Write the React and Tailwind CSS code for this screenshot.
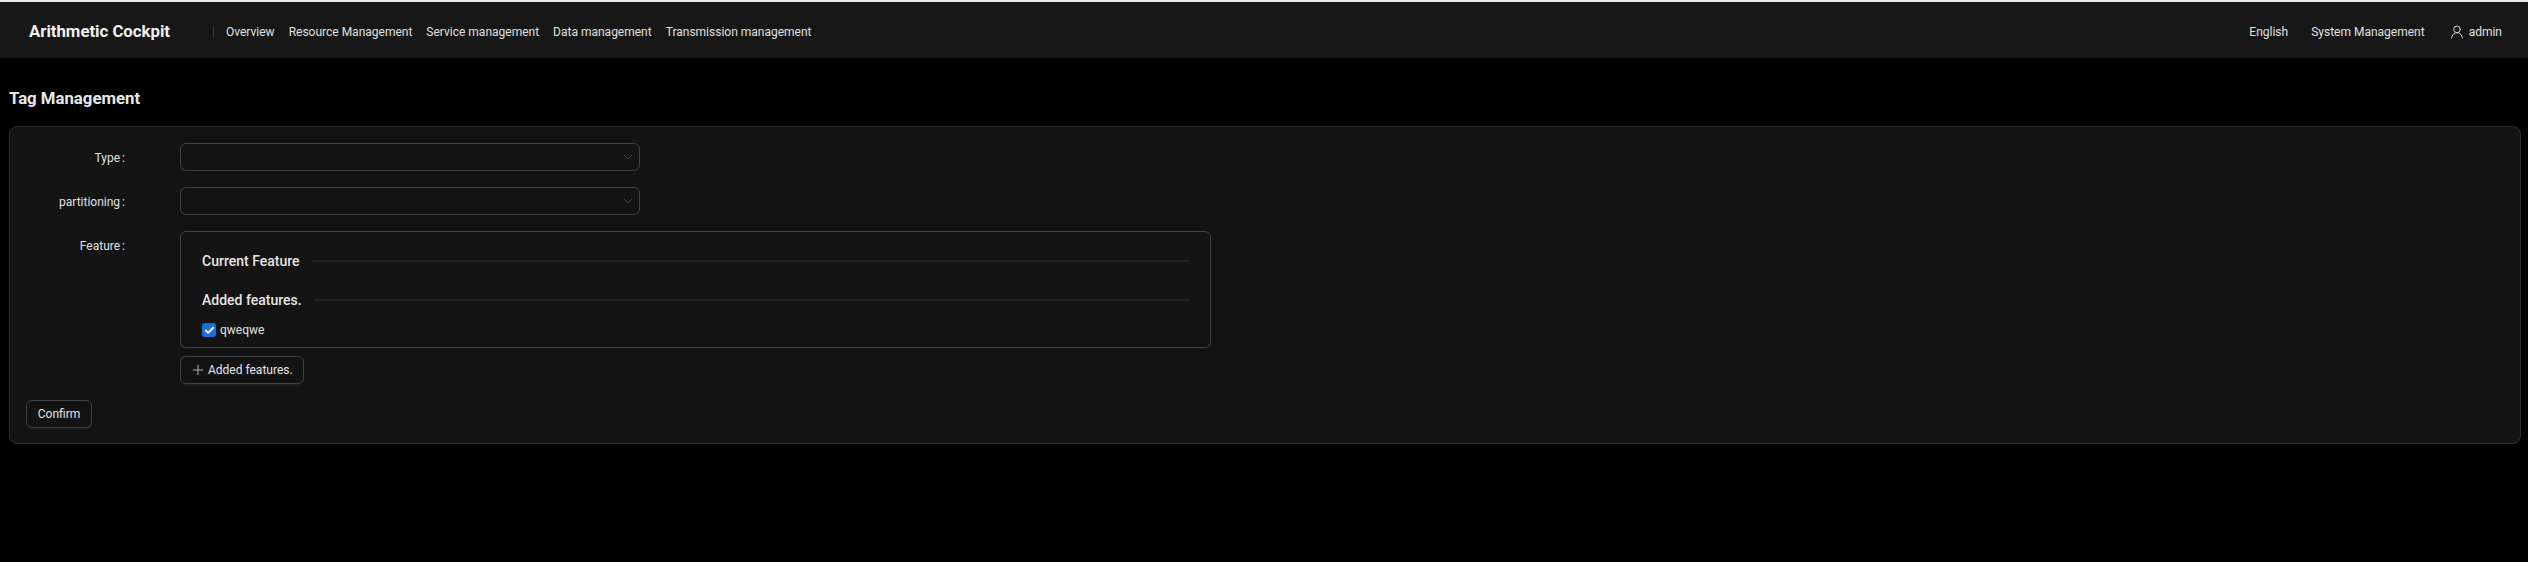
import { ChevronDown, Plus, UserRound, Check } from 'lucide-react'

const NAV = ['Overview', 'Resource Management', 'Service management', 'Data management', 'Transmission management']

function Select() {
  return (
    <div className="h-7 w-[460px] flex items-center justify-end pr-[3px] rounded-md border border-[#424242]">
      <ChevronDown size={16} strokeWidth={1} className="text-[#5c5c5c]" />
    </div>
  )
}

function Label({ children }) {
  return <div className="w-[99px] h-7 mr-[55px] text-right text-[12px] leading-[30px] text-[#e0e0e0]">{children}<span className="ml-[2px]">:</span></div>
}

function SectionTitle({ children }) {
  return (
    <div className="flex items-center gap-3 h-5">
      <span className="text-[14px] font-medium text-[#e6e6e6]">{children}</span>
      <div className="flex-1 h-0.5 bg-[#222222]" />
    </div>
  )
}

function Button({ children, className = '' }) {
  return (
    <button className={`h-7 flex items-center rounded-md border border-[#424242] text-[12px] text-[#e6e6e6] shadow-[0_2px_0_rgba(255,255,255,0.03)] ${className}`}>
      {children}
    </button>
  )
}

export default function App() {
  return (
    <div className="min-h-[562px] bg-black font-['Roboto',sans-serif] border-t-2 border-[#e8e8e8]">
      <header className="h-[56px] bg-[#171717] flex items-center pl-[29px] pr-[26px] pt-[3px]">
        <span className="w-[184px] text-[16.75px] font-bold text-[#f0f0f0]">Arithmetic Cockpit</span>
        <div className="w-px h-3 bg-[#333] mr-[12px]" />
        <nav className="flex gap-[14px] text-[12px] text-[#e0e0e0]">
          {NAV.map(n => <span key={n}>{n}</span>)}
        </nav>
        <div className="ml-auto flex items-center text-[12px] text-[#e0e0e0]">
          <span className="mr-[23px]">English</span>
          <span className="mr-6">System Management</span>
          <UserRound size={16} strokeWidth={1.5} className="mr-1 text-[#d0d0d0]" />
          <span>admin</span>
        </div>
      </header>

      <main className="px-[9px]">
        <h1 className="h-[68px] pt-[14px] flex items-center text-[16.75px] font-bold text-[#e8e8e8]">Tag Management</h1>
        <div className="h-[318px] w-[2512px] rounded-lg border border-[#2e2e2e] bg-[#141414] pt-4 pl-[16px]">
          <div className="flex mb-4">
            <Label>Type</Label>
            <Select />
          </div>
          <div className="flex mb-4">
            <Label>partitioning</Label>
            <Select />
          </div>
          <div className="flex">
            <Label>Feature</Label>
            <div>
              <div className="h-[117px] w-[1031px] rounded-md border border-[#424242] pt-[19px] pl-[21px] pr-[20px]">
                <SectionTitle>Current Feature</SectionTitle>
                <div className="h-[19px]" />
                <SectionTitle>Added features.</SectionTitle>
                <div className="mt-[11px] flex items-center gap-[4px] text-[12px] text-[#e0e0e0]">
                  <span className="w-[14px] h-[14px] rounded-[3px] bg-[#1f6fe0] flex items-center justify-center">
                    <Check size={11} strokeWidth={4} className="text-white" />
                  </span>
                  qweqwe
                </div>
              </div>
              <Button className="mt-2 w-[124px] pl-[9px] gap-[2px]">
                <Plus size={16} strokeWidth={1.5} className="text-[#b0b0b0]" />
                Added features.
              </Button>
            </div>
          </div>
          <Button className="mt-4 w-[66px] justify-center">Confirm</Button>
        </div>
      </main>
    </div>
  )
}
